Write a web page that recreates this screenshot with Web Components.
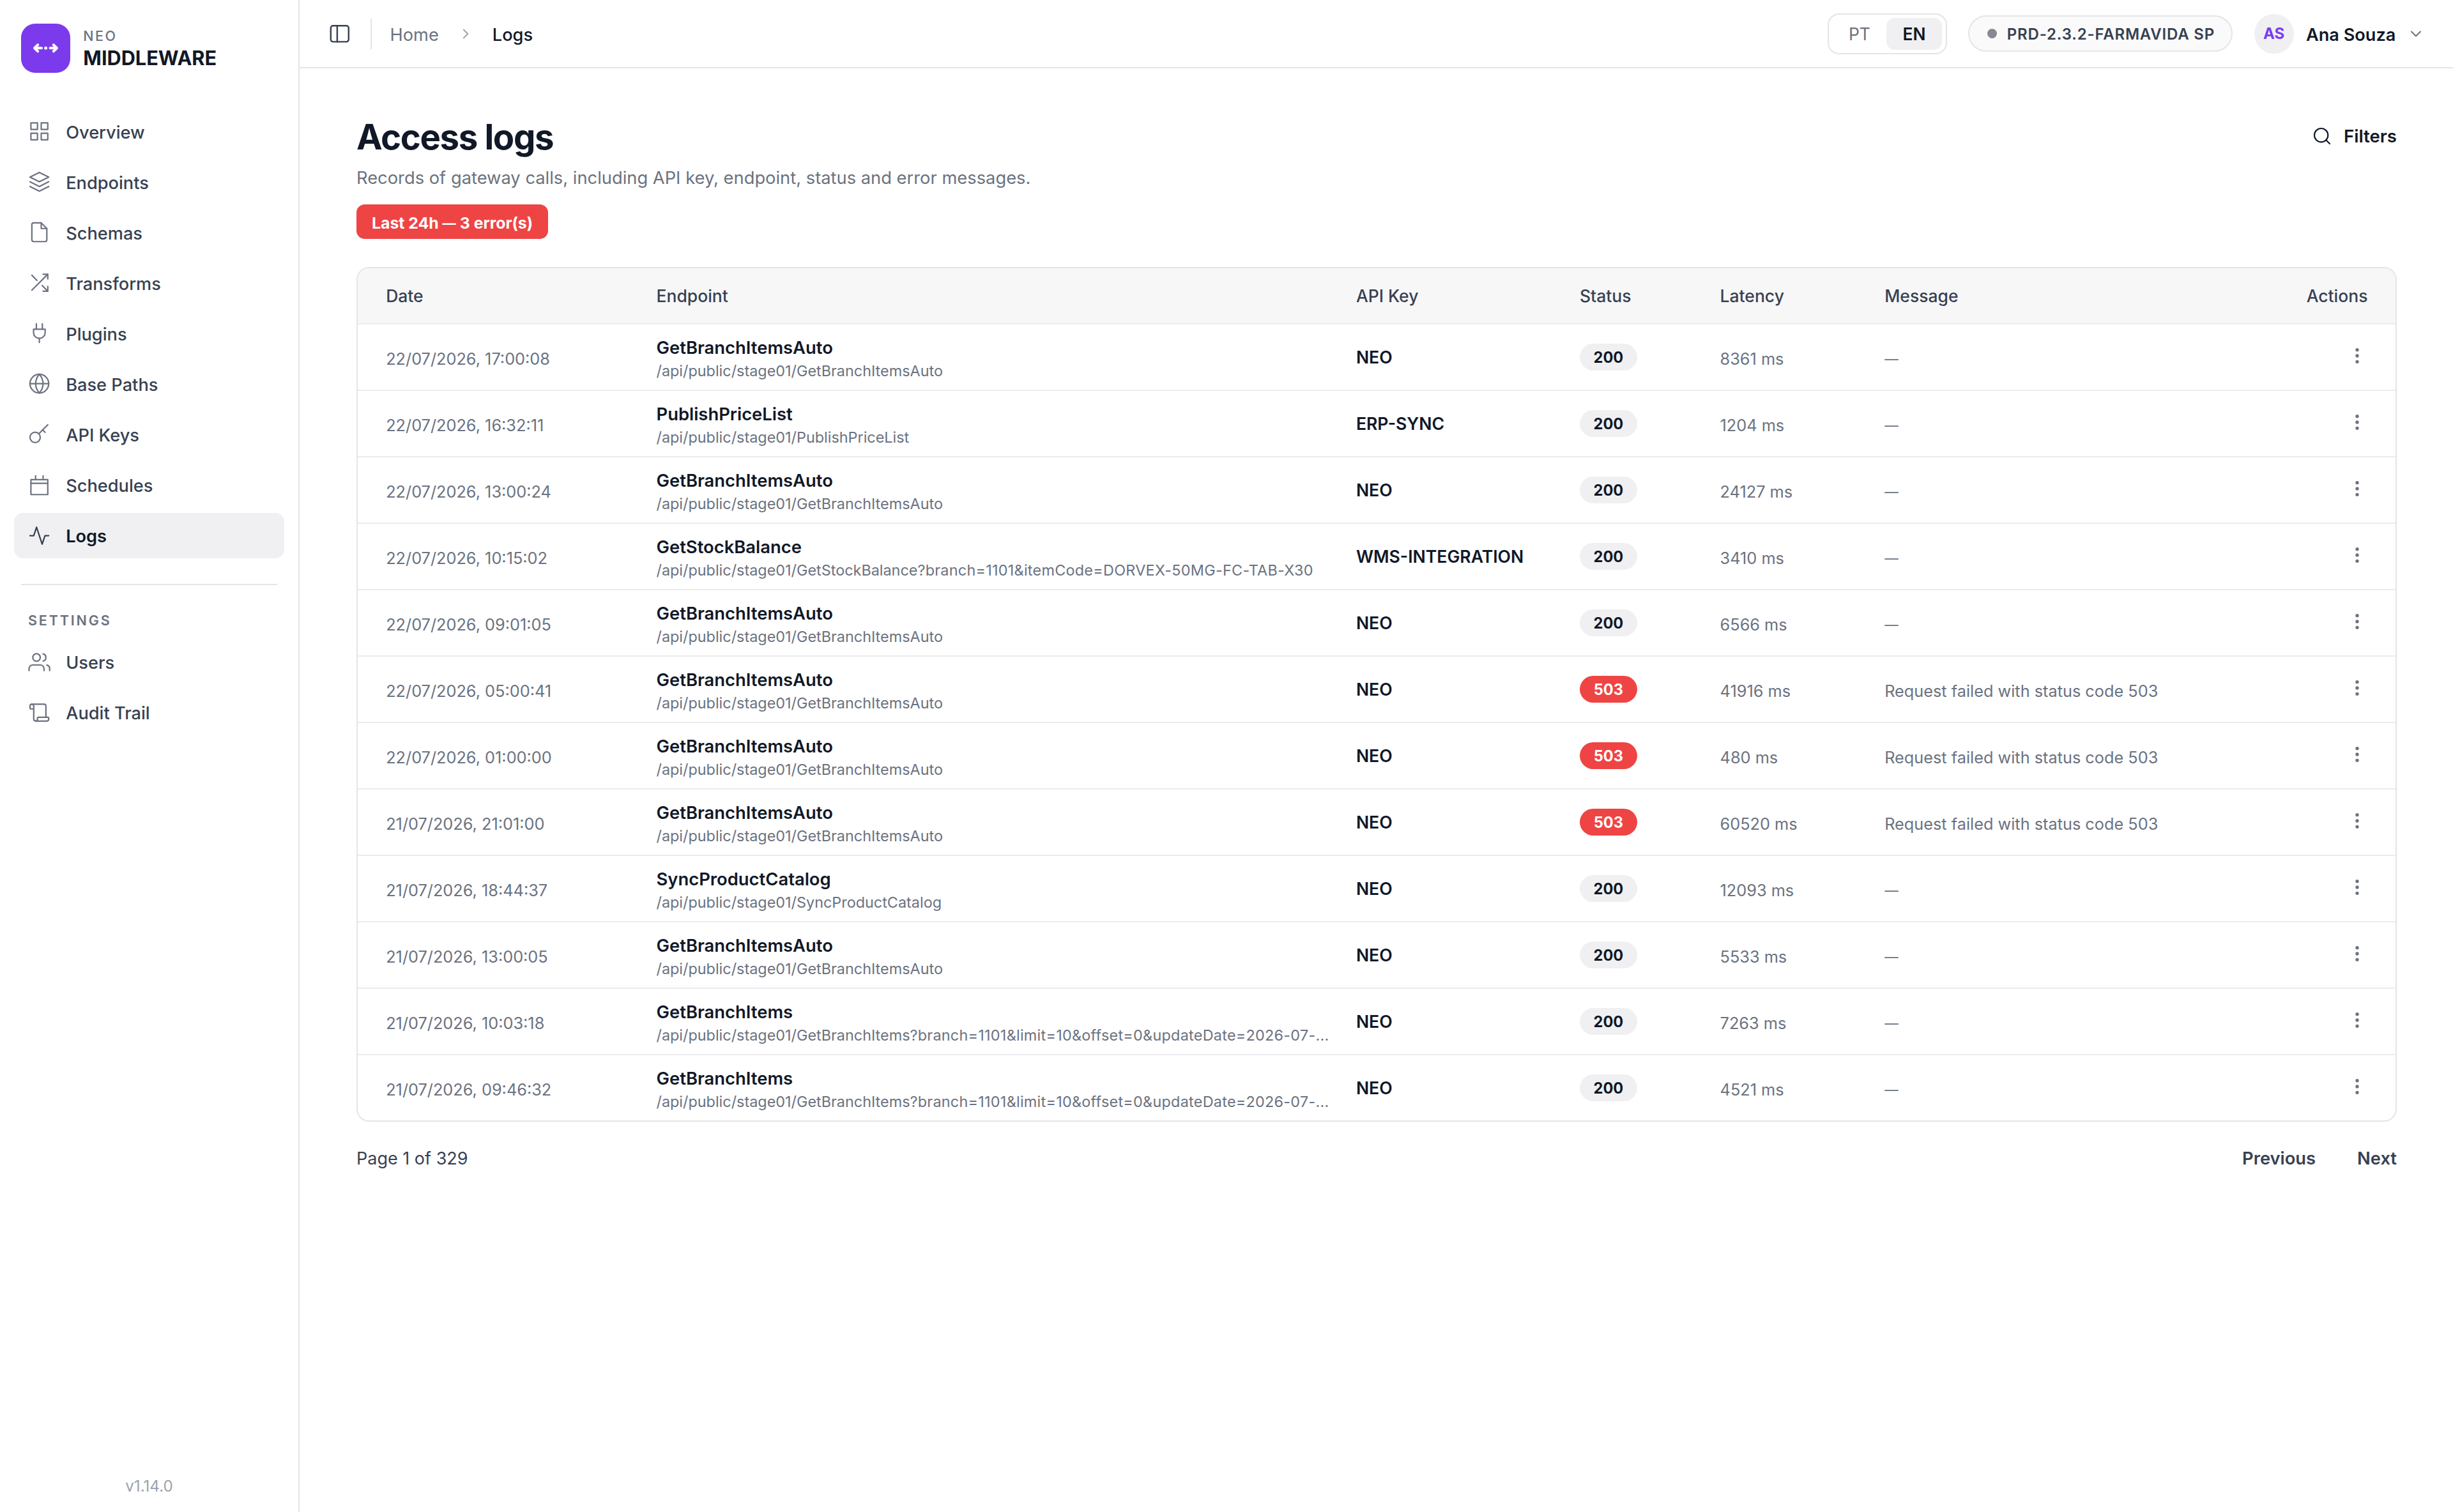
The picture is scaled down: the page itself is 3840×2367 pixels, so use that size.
<!DOCTYPE html>
<html lang="en">
<head>
<meta charset="utf-8">
<title>Access logs</title>
<style>
html, body {
    margin: 0;
    height: 100%;
}
body {
    font-family: Inter, "Liberation Sans", sans-serif;
    font-size: 27.2px;
    color: #111827;
    background: #fff;
    --ink: #111827;
    --text: #374151;
    --muted: #6b7280;
    --faint: #9ca3af;
    --line: #e5e5e7;
    --soft: #f0f0f2;
    --purple: #7c3aed;
    --red: #ef4444;
}
</style>
</head>
<body>
<app-shell>
    <side-bar slot="side">
        <brand-mark slot="brand" over="NEO">MIDDLEWARE</brand-mark>
        <nav-item icon="grid">Overview</nav-item>
        <nav-item icon="layers">Endpoints</nav-item>
        <nav-item icon="file">Schemas</nav-item>
        <nav-item icon="shuffle">Transforms</nav-item>
        <nav-item icon="plug">Plugins</nav-item>
        <nav-item icon="globe">Base Paths</nav-item>
        <nav-item icon="key">API Keys</nav-item>
        <nav-item icon="calendar">Schedules</nav-item>
        <nav-item icon="activity" active>Logs</nav-item>
        <nav-item slot="settings" icon="users">Users</nav-item>
        <nav-item slot="settings" icon="scroll">Audit Trail</nav-item>
        <span slot="version">v1.14.0</span>
    </side-bar>
    <top-bar slot="top">
        <bread-crumbs slot="left" root="Home">Logs</bread-crumbs>
        <lang-switch></lang-switch>
        <env-badge>PRD-2.3.2-FARMAVIDA SP</env-badge>
        <user-menu initials="AS">Ana Souza</user-menu>
    </top-bar>
    <page-head heading="Access logs">
        Records of gateway calls, including API key, endpoint, status and error messages.
        <error-badge slot="badge"></error-badge>
    </page-head>
    <log-table></log-table>
    <page-nav></page-nav>
</app-shell>

<script>
'use strict'

const ICONS = {
    grid: '<rect x="3" y="3" width="7" height="7"/><rect x="14" y="3" width="7" height="7"/><rect x="14" y="14" width="7" height="7"/><rect x="3" y="14" width="7" height="7"/>',
    layers: '<path d="M12 2 2 7l10 5 10-5-10-5z"/><path d="m2 17 10 5 10-5"/><path d="m2 12 10 5 10-5"/>',
    file: '<path d="M14 2H6a2 2 0 0 0-2 2v16a2 2 0 0 0 2 2h12a2 2 0 0 0 2-2V8z"/><path d="M14 2v6h6"/>',
    shuffle: '<path d="M16 3h5v5"/><path d="M4 20 21 3"/><path d="M21 16v5h-5"/><path d="m15 15 6 6"/><path d="m4 4 5.5 5.5"/>',
    plug: '<path d="M12 22v-4.5"/><path d="M8.8 7.8V2"/><path d="M15.2 7.8V2"/><path d="M5.8 7.8h12.4v3.7a6 6 0 0 1-6 6h-.4a6 6 0 0 1-6-6z"/>',
    globe: '<circle cx="12" cy="12" r="10"/><path d="M2 12h20"/><path d="M12 2a15.3 15.3 0 0 1 4 10 15.3 15.3 0 0 1-4 10 15.3 15.3 0 0 1-4-10 15.3 15.3 0 0 1 4-10z"/>',
    key: '<circle cx="7.5" cy="15.5" r="5.5"/><path d="m11.4 11.6 9.6-9.6"/><path d="m15.5 7.5 2.6 2.6"/>',
    calendar: '<path d="M3 6h18v16H3z"/><path d="M3 10h18"/><path d="M8 2v4"/><path d="M16 2v4"/>',
    activity: '<path d="M22 12h-4l-3 9L9 3l-3 9H2"/>',
    users: '<path d="M17 21v-2a4 4 0 0 0-4-4H5a4 4 0 0 0-4 4v2"/><circle cx="9" cy="7" r="4"/><path d="M23 21v-2a4 4 0 0 0-3-3.87"/><path d="M16 3.13a4 4 0 0 1 0 7.75"/>',
    scroll: '<path d="M19 17V5a2 2 0 0 0-2-2H4"/><path d="M8 21h12a2 2 0 0 0 2-2v-1a1 1 0 0 0-1-1H11a1 1 0 0 0-1 1v1a2 2 0 1 1-4 0V5a2 2 0 1 0-4 0v2a1 1 0 0 0 1 1h3"/>',
    panel: '<rect x="2" y="3" width="20" height="18" rx="2.6"/><path d="M9.2 3v18"/>',
    right: '<path d="m9 18 6-6-6-6"/>',
    down: '<path d="m6 9 6 6 6-6"/>',
    search: '<circle cx="11" cy="11" r="8"/><path d="m21 21-4.35-4.35"/>',
    more: '<circle cx="12" cy="5" r="1"/><circle cx="12" cy="12" r="1"/><circle cx="12" cy="19" r="1"/>',
}

const icon = (name, size, stroke) =>
    `<svg width="${size}" height="${size}" viewBox="0 0 24 24" fill="none" stroke="currentColor" stroke-width="${stroke}" stroke-linecap="round" stroke-linejoin="round">${ICONS[name]}</svg>`

// shared base: writes the markup into an open shadow root
class Base extends HTMLElement {
    connectedCallback() {
        if (this.shadowRoot) return
        this.attachShadow({mode: 'open'})
        this.shadowRoot.innerHTML = `<style>svg { display: block; flex: none; }</style>` + this.render()
    }
    attr(n) {
        return this.getAttribute(n) || ''
    }
}

class AppShell extends Base {
    render() {
        return /*html*/`
<style>
:host {
    display: grid;
    grid-template-columns: 469px minmax(0, 1fr);
    min-height: 100vh;
}
.main { display: flex; flex-direction: column; }
.content {
    padding: 75px 88px 0 89px;
}
</style>
<slot name="side"></slot>
<div class="main">
    <slot name="top"></slot>
    <div class="content"><slot></slot></div>
</div>`
    }
}

class SideBar extends Base {
    render() {
        return /*html*/`
<style>
:host {
    display: flex;
    flex-direction: column;
    box-sizing: border-box;
    border-right: 2px solid var(--line);
    padding: 37px 22px 25px 22px;
}
.list {
    display: flex;
    flex-direction: column;
    gap: 8.1px;
}
.main { margin-top: 56px; }
.rule {
    height: 2px;
    margin: 40.5px 11px 0;
    background: var(--line);
}
.label {
    margin: 39.5px 22px 15px;
    font-size: 21.5px;
    font-weight: 600;
    line-height: 30px;
    letter-spacing: 2.85px;
    color: var(--muted);
}
.version {
    margin-top: auto;
    text-align: center;
    font-size: 24.2px;
    line-height: 30px;
    color: var(--faint);
}
</style>
<slot name="brand"></slot>
<div class="list main"><slot></slot></div>
<div class="rule"></div>
<div class="label">SETTINGS</div>
<div class="list"><slot name="settings"></slot></div>
<div class="version"><slot name="version"></slot></div>`
    }
}

class BrandMark extends Base {
    render() {
        return /*html*/`
<style>
:host {
    display: flex;
    gap: 20.3px;
    padding-left: 11px;
}
.logo {
    width: 77px;
    height: 77px;
    border-radius: 22px;
    background: var(--purple);
    color: #fff;
}
.over {
    margin-top: 6px;
    font-size: 21.5px;
    font-weight: 500;
    line-height: 27px;
    letter-spacing: 2.5px;
    color: var(--muted);
}
.name {
    margin-top: 2px;
    font-size: 30.7px;
    font-weight: 700;
    line-height: 38px;
}
</style>
<div class="logo">
    <svg width="77" height="77" viewBox="0 0 77 77" fill="none" stroke="currentColor" stroke-width="4" stroke-linecap="round" stroke-linejoin="round">
        <path d="M32 38.3H21M26.2 33.2 21 38.3l5.2 5.1M45.5 38.3H56M50.8 33.2 56 38.3l-5.2 5.1"/>
        <circle cx="38.6" cy="38.3" r="2.5" fill="currentColor" stroke="none"/>
    </svg>
</div>
<div>
    <div class="over">${this.attr('over')}</div>
    <div class="name"><slot></slot></div>
</div>`
    }
}

class NavItem extends Base {
    render() {
        return /*html*/`
<style>
:host {
    display: flex;
    align-items: center;
    gap: 24px;
    height: 71px;
    padding-left: 22px;
    border-radius: 14px;
    font-weight: 500;
    color: var(--text);
}
svg { color: var(--muted); }
:host([active]) {
    background: var(--soft);
    font-weight: 600;
    color: var(--ink);
}
:host([active]) svg { color: var(--text); }
span { padding-top: 3px; }
</style>
${icon(this.attr('icon'), 35.2, 1.5)}
<span><slot></slot></span>`
    }
}

class TopBar extends Base {
    render() {
        return /*html*/`
<style>
:host {
    display: flex;
    align-items: center;
    justify-content: space-between;
    height: 105px;
    padding: 0 44px 0 46.4px;
    border-bottom: 2px solid var(--line);
}
.group {
    display: flex;
    align-items: center;
}
.left { gap: 28.8px; }
.right { gap: 33.3px; }
.panel { color: var(--text); margin-right: 2px; }
.sep {
    width: 2px;
    height: 48px;
    background: var(--line);
}
</style>
<div class="group left">
    <div class="panel">${icon('panel', 33.6, 1.75)}</div>
    <div class="sep"></div>
    <slot name="left"></slot>
</div>
<div class="group right"><slot></slot></div>`
    }
}

class BreadCrumbs extends Base {
    render() {
        return /*html*/`
<style>
:host {
    display: flex;
    align-items: center;
    gap: 29px;
    color: var(--muted);
}
svg { color: var(--faint); }
span { padding-top: 3px; }
.here { font-weight: 500; color: var(--ink); }
</style>
<span>${this.attr('root')}</span>
${icon('right', 26, 1.7)}
<span class="here"><slot></slot></span>`
    }
}

class LangSwitch extends Base {
    render() {
        return /*html*/`
<style>
:host {
    display: flex;
    box-sizing: border-box;
    width: 187px;
    height: 64px;
    padding: 5px 6px;
    border: 2px solid var(--line);
    border-radius: 18px;
    font-size: 26.4px;
}
div {
    flex: 1;
    display: flex;
    align-items: center;
    justify-content: center;
    height: 50px;
    border-radius: 13px;
    color: var(--muted);
}
.on {
    flex: 0 0 87px;
    background: var(--soft);
    color: var(--ink);
    font-weight: 600;
}
</style>
<div>PT</div><div class="on">EN</div>`
    }
}

class EnvBadge extends Base {
    render() {
        return /*html*/`
<style>
:host {
    display: flex;
    align-items: center;
    gap: 16px;
    box-sizing: border-box;
    width: 414px;
    height: 57px;
    padding-left: 27.5px;
    border: 2px solid var(--line);
    border-radius: 29px;
    background: #fafafa;
    font-size: 24px;
    font-weight: 600;
    letter-spacing: .81px;
    white-space: nowrap;
    color: var(--text);
}
i {
    width: 15px;
    height: 15px;
    border-radius: 50%;
    background: #868993;
}
span { padding-top: 2px; }
</style>
<i></i><span><slot></slot></span>`
    }
}

class UserMenu extends Base {
    render() {
        return /*html*/`
<style>
:host {
    display: flex;
    align-items: center;
    font-weight: 600;
}
.avatar {
    display: flex;
    align-items: center;
    justify-content: center;
    width: 62px;
    height: 62px;
    margin-right: 19.5px;
    border-radius: 50%;
    background: var(--soft);
    color: var(--purple);
    font-size: 24px;
    font-weight: 700;
}
span { padding-top: 3px; font-size: 27.1px; }
svg { margin-left: 17.7px; color: var(--muted); }
</style>
<div class="avatar">${this.attr('initials')}</div>
<span><slot></slot></span>
${icon('down', 28, 1.75)}`
    }
}

class PageHead extends Base {
    render() {
        return /*html*/`
<style>
:host {
    display: flex;
    justify-content: space-between;
    align-items: flex-start;
}
h1 {
    margin: 0;
    font-size: 54.5px;
    font-weight: 700;
    line-height: 64px;
    letter-spacing: -.025em;
}
p {
    margin: 13px 0 21px;
    font-size: 27.32px;
    line-height: 40px;
    color: var(--muted);
}
.filters {
    display: flex;
    align-items: center;
    gap: 18px;
    height: 61px;
    font-size: 27.6px;
    font-weight: 600;
}
</style>
<div>
    <h1>${this.attr('heading')}</h1>
    <p><slot></slot></p>
    <slot name="badge"></slot>
</div>
<div class="filters">${icon('search', 32, 1.6)}<span>Filters</span></div>`
    }
}

class ErrorBadge extends Base {
    render() {
        return /*html*/`
<style>
:host {
    display: flex;
    width: fit-content;
    box-sizing: border-box;
    height: 53.5px;
    padding: 1.5px 24px 0 24px;
    border-radius: 13px;
    background: var(--red);
    color: #fff;
    font-size: 24.8px;
    font-weight: 700;
    line-height: 54px;
    white-space: pre;
}
.dash { font-size: .86em; }
</style>Last 24h <span class="dash">—</span> 3 error(s)`
    }
}

const ROWS = [
    ['22/07/2026, 17:00:08', 'GetBranchItemsAuto', '', 'NEO', 200, 8361],
    ['22/07/2026, 16:32:11', 'PublishPriceList', '', 'ERP-SYNC', 200, 1204],
    ['22/07/2026, 13:00:24', 'GetBranchItemsAuto', '', 'NEO', 200, 24127],
    ['22/07/2026, 10:15:02', 'GetStockBalance', '?branch=1101&amp;itemCode=DORVEX-50MG-FC-TAB-X30', 'WMS-INTEGRATION', 200, 3410],
    ['22/07/2026, 09:01:05', 'GetBranchItemsAuto', '', 'NEO', 200, 6566],
    ['22/07/2026, 05:00:41', 'GetBranchItemsAuto', '', 'NEO', 503, 41916],
    ['22/07/2026, 01:00:00', 'GetBranchItemsAuto', '', 'NEO', 503, 480],
    ['21/07/2026, 21:01:00', 'GetBranchItemsAuto', '', 'NEO', 503, 60520],
    ['21/07/2026, 18:44:37', 'SyncProductCatalog', '', 'NEO', 200, 12093],
    ['21/07/2026, 13:00:05', 'GetBranchItemsAuto', '', 'NEO', 200, 5533],
    ['21/07/2026, 10:03:18', 'GetBranchItems', '?branch=1101&amp;limit=10&amp;offset=0&amp;updateDate=2026-07-...', 'NEO', 200, 7263],
    ['21/07/2026, 09:46:32', 'GetBranchItems', '?branch=1101&amp;limit=10&amp;offset=0&amp;updateDate=2026-07-...', 'NEO', 200, 4521],
]

const COLUMNS = '423.3px 1095.4px 350px 219.7px 257.6px minmax(0, 1fr) auto'

class LogTable extends Base {
    render() {
        return /*html*/`
<style>
:host {
    display: block;
    margin-top: 44.5px;
    border: 2px solid var(--line);
    border-radius: 20px;
    overflow: hidden;
}
.head {
    display: grid;
    grid-template-columns: ${COLUMNS};
    align-items: center;
    height: 86px;
    padding: 0 43.5px 0 44.2px;
    background: #f7f7f8;
    border-bottom: 2px solid #ececee;
    font-size: 26.5px;
    font-weight: 500;
    color: var(--text);
}
</style>
<div class="head">
    <div>Date</div><div>Endpoint</div><div>API Key</div><div>Status</div><div>Latency</div><div>Message</div><div>Actions</div>
</div>
${ROWS.map(([date, name, query, key, status, ms]) => `<log-row date="${date}" name="${name}" query="${query.replace(/&amp;/g, '&amp;amp;')}" key="${key}" status="${status}" ms="${ms}"></log-row>`).join('')}`
    }
}

class LogRow extends Base {
    render() {
        const failed = this.attr('status') === '503'
        return /*html*/`
<style>
:host {
    display: grid;
    grid-template-columns: ${COLUMNS};
    align-items: center;
    height: 102px;
    padding: 0 44.5px 0 44.2px;
    border-bottom: 2px solid #ececee;
    font-size: 25.3px;
    color: var(--muted);
    white-space: nowrap;
}
:host(:last-child) { border-bottom: 0; }
.low { padding-top: 4px; }
.endpoint { padding-top: 7px; }
.name {
    font-size: 27.4px;
    font-weight: 600;
    line-height: 37px;
    color: var(--ink);
}
.path {
    font-size: 23.4px;
    line-height: 36px;
}
.query { letter-spacing: .26px; }
.key {
    font-size: 26.6px;
    font-weight: 600;
    color: var(--ink);
}
.pill {
    display: flex;
    align-items: center;
    justify-content: center;
    width: 90px;
    height: 42px;
    border-radius: 21px;
    background: var(--soft);
    color: var(--ink);
    font-size: 23.6px;
    font-weight: 700;
}
.pill.bad {
    background: var(--red);
    color: #fff;
}
.dash { font-size: 21.5px; padding-top: 5px; }
svg { margin-top: -5px; color: var(--muted); }
</style>
<div class="low">${this.attr('date')}</div>
<div class="endpoint">
    <div class="name">${this.attr('name')}</div>
    <div class="path">/api/public/stage01/${this.attr('name')}<span class="query">${this.attr('query')}</span></div>
</div>
<div class="key">${this.attr('key')}</div>
<div><div class="pill ${failed ? 'bad' : ''}">${this.attr('status')}</div></div>
<div class="low">${this.attr('ms')} ms</div>
<div class="low ${failed ? '' : 'dash'}">${failed ? 'Request failed with status code 503' : '—'}</div>
${icon('more', 32, 2)}`
    }
}

class PageNav extends Base {
    render() {
        return /*html*/`
<style>
:host {
    display: flex;
    gap: 65px;
    margin-top: 38px;
    line-height: 40px;
    color: var(--text);
}
.count { margin-right: auto; font-size: 27px; }
.btn { font-size: 27.3px; font-weight: 600; }
</style>
<div class="count">Page 1 of 329</div>
<div class="btn">Previous</div>
<div class="btn">Next</div>`
    }
}

customElements.define('app-shell', AppShell)
customElements.define('side-bar', SideBar)
customElements.define('brand-mark', BrandMark)
customElements.define('nav-item', NavItem)
customElements.define('top-bar', TopBar)
customElements.define('bread-crumbs', BreadCrumbs)
customElements.define('lang-switch', LangSwitch)
customElements.define('env-badge', EnvBadge)
customElements.define('user-menu', UserMenu)
customElements.define('page-head', PageHead)
customElements.define('error-badge', ErrorBadge)
customElements.define('log-table', LogTable)
customElements.define('log-row', LogRow)
customElements.define('page-nav', PageNav)
</script>
</body>
</html>
